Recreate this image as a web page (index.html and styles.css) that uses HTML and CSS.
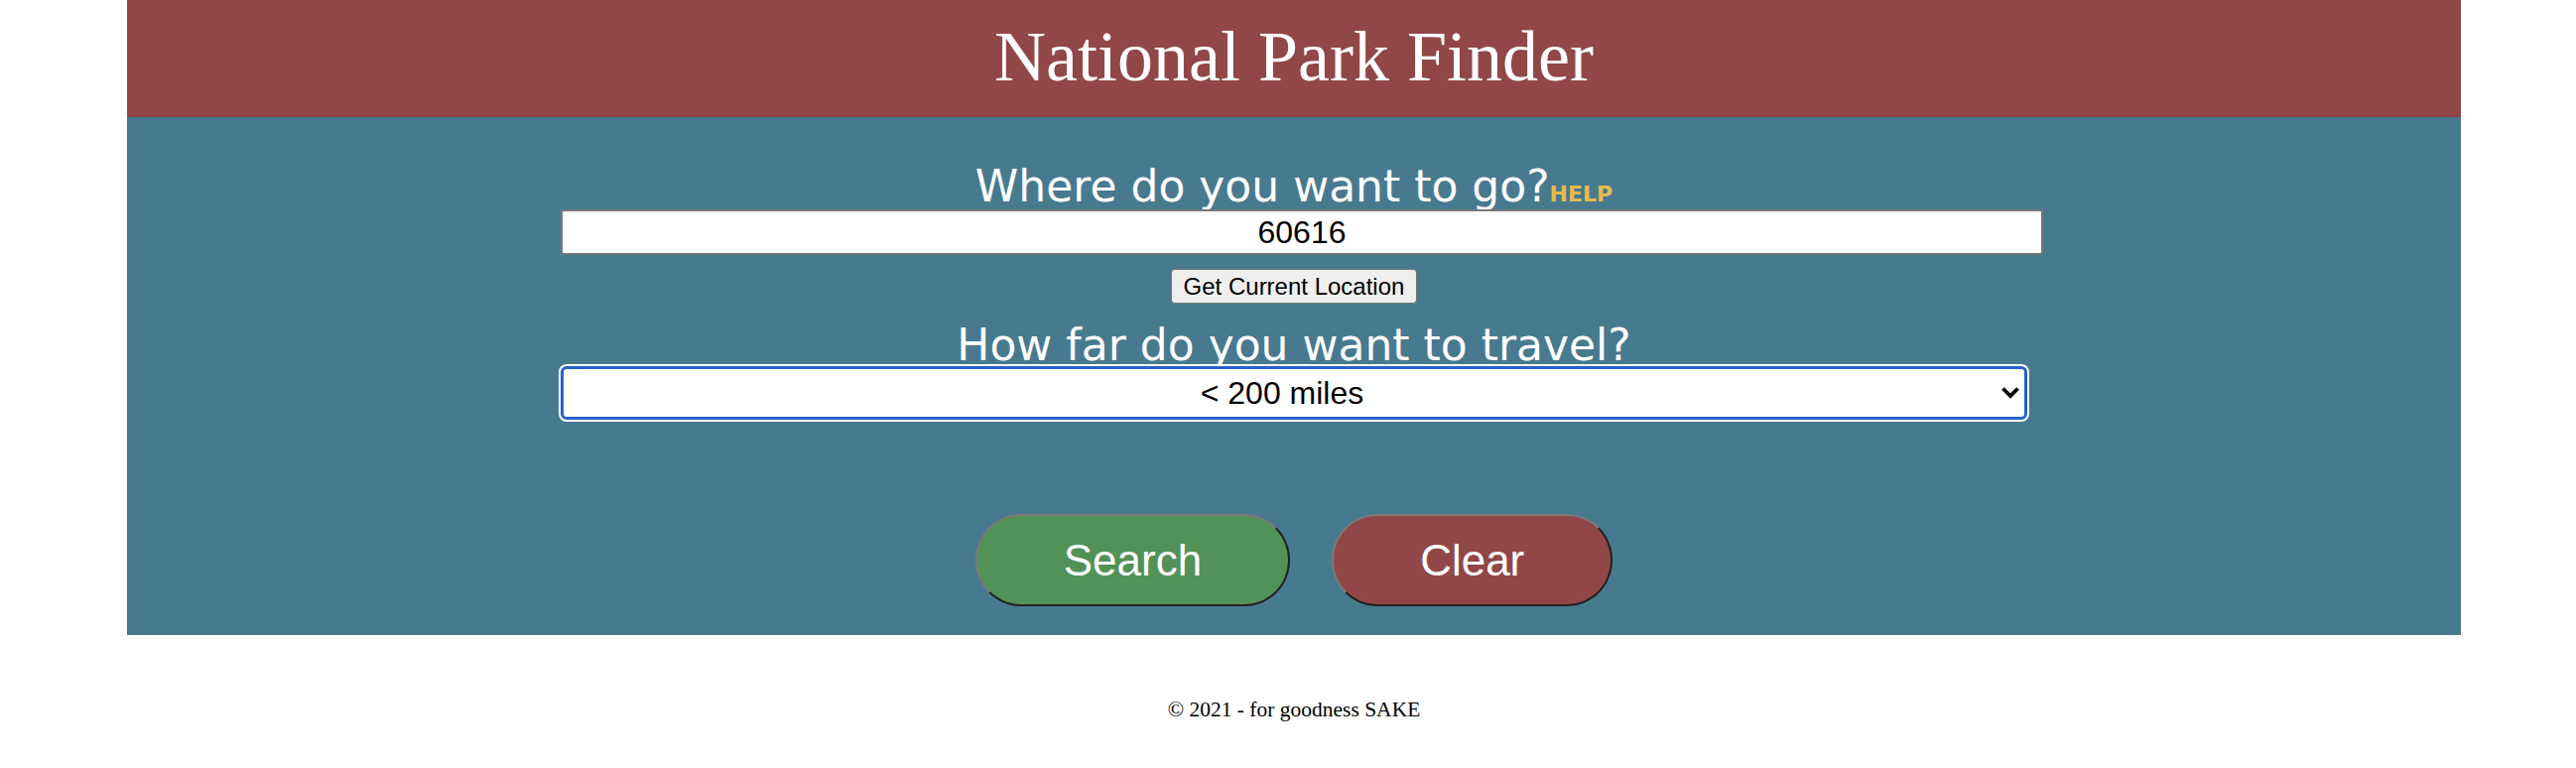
FILE: index.html
```html
<!DOCTYPE html>
<html lang="en">
<head>
<meta charset="utf-8">
<title>National Park Finder</title>
<link rel="stylesheet" href="styles.css">
</head>
<body>
<div class="page">
  <header class="banner">
    <h1 class="title">National Park Finder</h1>
  </header>
  <main class="finder">
    <form class="form">
      <label class="label label-where" for="zip">Where do you want to go?<span class="help">HELP</span></label>
      <input class="zip" id="zip" type="text" value="60616">
      <button class="locate" type="button">Get Current Location</button>
      <label class="label label-far" for="dist">How far do you want to travel?</label>
      <div class="select-wrap">
        <select class="dist" id="dist">
          <option>&lt; 200 miles</option>
        </select>
        <svg class="chevron" width="20" height="13" viewBox="0 0 20 13" aria-hidden="true"><polyline points="2.5,2.5 10,10 17.5,2.5" fill="none" stroke="#000" stroke-width="3.8" stroke-linejoin="miter"/></svg>
      </div>
      <div class="actions">
        <button class="pill pill-search" type="button">Search</button>
        <button class="pill pill-clear" type="reset">Clear</button>
      </div>
    </form>
  </main>
  <footer class="footer">© 2021 - for goodness SAKE</footer>
</div>
</body>
</html>
```
FILE: styles.css
```css
html, body {
  margin: 0;
  padding: 0;
  background: #ffffff;
}

.page {
  width: 2352px;
  margin: 0 116px 0 128px;
}

.banner {
  background: #914747;
  height: 118px;
  padding-top: 16px;
  box-sizing: border-box;
}

.title {
  margin: 0;
  text-align: center;
  font-family: "Liberation Serif", "Times New Roman", serif;
  font-weight: normal;
  font-size: 72px;
  line-height: 83px;
  color: #ffffff;
}

.finder {
  background: #487a8f;
  padding: 47px 0 29px;
}

.form {
  width: 1478px;
  margin: 0 auto;
  display: flex;
  flex-direction: column;
  align-items: center;
}

.label {
  display: block;
  text-align: center;
  font-family: "DejaVu Sans", Verdana, sans-serif;
  font-size: 44px;
  color: #ffffff;
  white-space: nowrap;
}

.label-where {
  line-height: 46px;
}

.help {
  font-family: "DejaVu Sans", Verdana, sans-serif;
  font-weight: bold;
  font-size: 22px;
  line-height: 0;
  color: #e6bc4c;
}

.zip {
  align-self: flex-start;
  box-sizing: content-box;
  width: 100%;
  height: 38px;
  margin: 0;
  padding: 2px 6px;
  border: 2px solid #767676;
  border-radius: 3px;
  background: #ffffff;
  font-family: "Liberation Sans", Arial, sans-serif;
  font-size: 32px;
  color: #000000;
  text-align: center;
  outline: none;
}

.locate {
  margin-top: 14px;
  height: 35px;
  padding: 0 12px;
  border: 1px solid #767676;
  border-radius: 4px;
  background: #efefef;
  font-family: "Liberation Sans", Arial, sans-serif;
  font-size: 24px;
  color: #000000;
}

.label-far {
  margin-top: 19px;
  line-height: 45px;
}

.select-wrap {
  position: relative;
  align-self: stretch;
  margin-top: -1px;
}

.dist {
  display: block;
  width: 100%;
  height: 54px;
  box-sizing: border-box;
  margin: 0;
  padding: 0 30px 0 6px;
  border: 3px solid #2661cb;
  border-radius: 6px;
  box-shadow: 0 0 0 2px #ffffff;
  background: #ffffff;
  -webkit-appearance: none;
  appearance: none;
  font-family: "Liberation Sans", Arial, sans-serif;
  font-size: 32px;
  color: #000000;
  text-align: center;
  text-align-last: center;
  outline: none;
}

.chevron {
  position: absolute;
  right: 7px;
  top: 20px;
  pointer-events: none;
}

.actions {
  display: flex;
  justify-content: center;
  gap: 42px;
  margin-top: 95px;
}

.pill {
  height: 93px;
  padding: 0 87px;
  border: 2px solid;
  border-color: #7a7a7a #222222 #222222 #7a7a7a;
  border-radius: 46px;
  font-family: "Liberation Sans", Arial, sans-serif;
  font-size: 44px;
  color: #ffffff;
}

.pill-search {
  background: #529158;
}

.pill-clear {
  background: #914747;
}

.footer {
  margin-top: 63px;
  text-align: center;
  font-family: "Liberation Serif", "Times New Roman", serif;
  font-size: 21.5px;
  color: #000000;
}
```
